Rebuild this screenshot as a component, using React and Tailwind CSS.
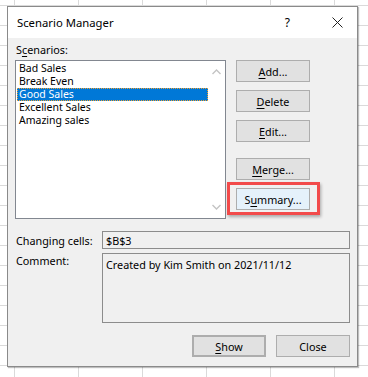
import React from 'react';

const items = ['Bad Sales', 'Break Even', 'Good Sales', 'Excellent Sales', 'Amazing sales'];

const Btn = ({ children, className = '' }) => (
  <div className={`h-[22px] w-[74px] flex items-center justify-center border border-[#adadad] bg-[#e1e1e1] ${className}`}>
    {children}
  </div>
);

const U = ({ children }) => <span className="underline underline-offset-[2px]">{children}</span>;

const Chevron = ({ up }) => (
  <svg width="9" height="6" viewBox="0 0 9 6" className="text-[#c4c4c4]">
    <path d={up ? 'M0.5 5 L4.5 1 L8.5 5' : 'M0.5 1 L4.5 5 L8.5 1'} fill="none" stroke="currentColor" strokeWidth="1.4" />
  </svg>
);

export default function App() {
  return (
    <div className="w-[368px] h-[377px] bg-white bg-[linear-gradient(to_right,#dadada_1px,transparent_1px),linear-gradient(to_bottom,#dadada_1px,transparent_1px)] bg-[size:64px_20px] bg-[position:14px_5px] pt-[6px] pl-[7px] font-['Noto_Sans',sans-serif] text-[10.8px] text-black leading-[13px]">
      <div className="w-[351px] h-[361px] bg-[#f0f0f0] border border-[#8a8a8a] shadow-[1px_1px_1px_rgba(0,0,0,0.25)] flex flex-col">
        {/* title bar */}
        <div className="h-[31px] bg-white flex items-center pl-[9px] pr-[14px] text-[11.3px]">
          <span className="flex-1">Scenario Manager</span>
          <span className="text-[12px] mr-[42px]">?</span>
          <svg width="11" height="11" viewBox="0 0 11 11">
            <path d="M0.5 0.5 L10.5 10.5 M10.5 0.5 L0.5 10.5" stroke="#222" strokeWidth="1" />
          </svg>
        </div>

        <div className="flex-1 pl-[7px] pr-[6px] pt-[5px] flex flex-col">
          <div className="h-[14px] leading-[14px] pl-[1px]">S<U>c</U>enarios:</div>

          <div className="mt-[3px] flex">
            {/* list box */}
            <div className="w-[211px] h-[159px] bg-white border border-[#828790] flex">
              <div className="flex-1 pt-[1px] pl-[1px] text-[10.5px]">
                {items.map((it) => (
                  <div
                    key={it}
                    className={`h-[13px] pl-[2px] leading-[13px] ${it === 'Good Sales' ? 'bg-[#0078d7] text-white outline outline-1 outline-dotted outline-[#f0a030] -outline-offset-1' : ''}`}
                  >
                    {it}
                  </div>
                ))}
              </div>
              <div className="w-[17px] flex flex-col items-center justify-between pt-[8px] pb-[8px]">
                <Chevron up />
                <Chevron />
              </div>
            </div>

            {/* buttons */}
            <div className="ml-[10px] flex flex-col">
              <Btn><U>A</U>dd...</Btn>
              <Btn className="mt-[8px]"><U>D</U>elete</Btn>
              <Btn className="mt-[8px]"><U>E</U>dit...</Btn>
              <Btn className="mt-[16px]"><U>M</U>erge...</Btn>
              <div className="relative mt-[8px]">
                <Btn className="border-[#0078d7] bg-[#e5f1fb]">S<U>u</U>mmary...</Btn>
                <div className="absolute left-[-9px] top-[-6px] w-[93px] h-[33px] border-[3px] border-[#f24a4a] shadow-[1px_2px_3px_rgba(0,0,0,0.3)]" />
              </div>
            </div>
          </div>

          <div className="mt-[12px] flex items-center">
            <div className="w-[87px] pl-[1px]">Changing cells:</div>
            <div className="w-[248px] h-[18px] border border-[#8c8c8c] pl-[3px] flex items-center">$B$3</div>
          </div>

          <div className="mt-[4px] flex">
            <div className="w-[87px] pl-[1px] pt-[1px]">Comment:</div>
            <div className="w-[248px] h-[70px] border border-[#8c8c8c] pl-[3px] pt-[4px]">Created by Kim Smith on 2021/11/12</div>
          </div>

          <div className="mt-[12px] flex justify-end pr-[1px]">
            <Btn className="border-2 border-[#0078d7]"><U>S</U>how</Btn>
            <Btn className="ml-[10px]">Close</Btn>
          </div>
        </div>
      </div>
    </div>
  );
}
